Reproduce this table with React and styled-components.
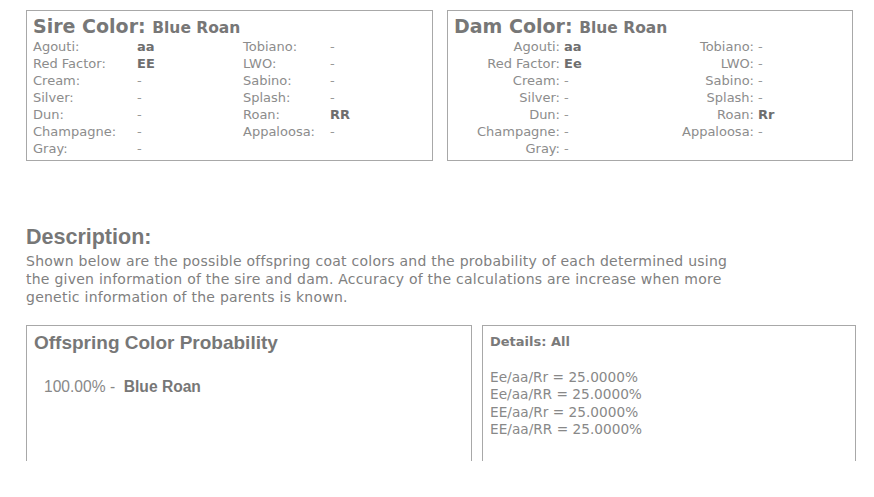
import React from "react";
import styled, { createGlobalStyle } from "styled-components";

const GlobalStyle = createGlobalStyle`
  body {
    margin: 0;
    background: #fff;
    font-family: "DejaVu Sans", Verdana, sans-serif;
    color: #888;
  }
`;

const sire = [
  ["Agouti:", "aa", "Tobiano:", "-"],
  ["Red Factor:", "EE", "LWO:", "-"],
  ["Cream:", "-", "Sabino:", "-"],
  ["Silver:", "-", "Splash:", "-"],
  ["Dun:", "-", "Roan:", "RR"],
  ["Champagne:", "-", "Appaloosa:", "-"],
  ["Gray:", "-", "", ""],
];

const dam = [
  ["Agouti:", "aa", "Tobiano:", "-"],
  ["Red Factor:", "Ee", "LWO:", "-"],
  ["Cream:", "-", "Sabino:", "-"],
  ["Silver:", "-", "Splash:", "-"],
  ["Dun:", "-", "Roan:", "Rr"],
  ["Champagne:", "-", "Appaloosa:", "-"],
  ["Gray:", "-", "", ""],
];

const details = [
  "Ee/aa/Rr = 25.0000%",
  "Ee/aa/RR = 25.0000%",
  "EE/aa/Rr = 25.0000%",
  "EE/aa/RR = 25.0000%",
];

const App = () => {
  return (
    <Page>
      <GlobalStyle />
      <ParentRow>
        <ParentCard $width={407}>
          <CardTitle>
            Sire Color: <small>Blue Roan</small>
          </CardTitle>
          <GeneGrid $cols="104px 106px 87px 1fr">
            {sire.map((row, i) => (
              <React.Fragment key={i}>
                <Label>{row[0]}</Label>
                <Value $bold={row[1] !== "-"}>{row[1]}</Value>
                <Label>{row[2]}</Label>
                <Value $bold={row[3] !== "-"}>{row[3]}</Value>
              </React.Fragment>
            ))}
          </GeneGrid>
        </ParentCard>
        <ParentCard $width={406}>
          <CardTitle>
            Dam Color: <small>Blue Roan</small>
          </CardTitle>
          <GeneGrid $cols="106px 97px 97px 1fr">
            {dam.map((row, i) => (
              <React.Fragment key={i}>
                <Label $right>{row[0]}</Label>
                <Value $bold={row[1] !== "-"} $tight>{row[1]}</Value>
                <Label $right>{row[2]}</Label>
                <Value $bold={row[3] !== "-"} $tight>{row[3]}</Value>
              </React.Fragment>
            ))}
          </GeneGrid>
        </ParentCard>
      </ParentRow>

      <Description>
        <h2>Description:</h2>
        <p>
          Shown below are the possible offspring coat colors and the probability of each
          determined using the given information of the sire and dam. Accuracy of the
          calculations are increase when more genetic information of the parents is known.
        </p>
      </Description>

      <ResultRow>
        <ResultCard $width={446}>
          <ProbTitle>Offspring Color Probability</ProbTitle>
          <ProbLine>
            100.00% - &nbsp;<b>Blue Roan</b>
          </ProbLine>
        </ResultCard>
        <ResultCard $width={374}>
          <DetailsTitle>Details: All</DetailsTitle>
          <DetailList>
            {details.map((d) => (
              <li key={d}>{d}</li>
            ))}
          </DetailList>
        </ResultCard>
      </ResultRow>
    </Page>
  );
};

export default App;

const Page = styled.div`
  padding: 10px 0 0 26px;
  height: 487px;
  overflow: hidden;
`;

const ParentRow = styled.div`
  display: flex;
  gap: 14px;
`;

const ParentCard = styled.section`
  box-sizing: border-box;
  width: ${(p) => p.$width}px;
  height: 151px;
  border: 1px solid #a8a8a8;
  padding: 5px 6px 0 6px;
`;

const CardTitle = styled.h3`
  margin: 0;
  font-size: 19px;
  line-height: 20px;
  font-weight: bold;
  color: #777;
  small {
    font-size: 15.5px;
  }
`;

const GeneGrid = styled.div`
  display: grid;
  grid-template-columns: ${(p) => p.$cols};
  font-size: 13px;
  line-height: 17px;
  white-space: nowrap;
`;

const Label = styled.span`
  color: #8c8c8c;
  text-align: ${(p) => (p.$right ? "right" : "left")};
`;

const Value = styled.span`
  color: ${(p) => (p.$bold ? "#6e6e6e" : "#999")};
  font-weight: ${(p) => (p.$bold ? "bold" : "normal")};
  padding-left: ${(p) => (p.$tight ? "4px" : "0")};
`;

const Description = styled.div`
  margin-top: 64px;
  h2 {
    margin: 0 0 3px 0;
    font-family: "Liberation Sans", Arial, sans-serif;
    font-size: 21.5px;
    line-height: 24px;
    font-weight: bold;
    color: #777;
  }
  p {
    margin: 0;
    width: 720px;
    font-size: 14px;
    letter-spacing: 0.25px;
    line-height: 18px;
    color: #808080;
  }
`;

const ResultRow = styled.div`
  display: flex;
  gap: 10px;
  margin-top: 19px;
`;

const ResultCard = styled.section`
  box-sizing: border-box;
  width: ${(p) => p.$width}px;
  height: 136px;
  border: 1px solid #a8a8a8;
  border-bottom: none;
  padding: 6px 7px 0 7px;
`;

const ProbTitle = styled.h3`
  margin: 0;
  font-family: "Liberation Sans", Arial, sans-serif;
  font-size: 19px;
  line-height: 22px;
  font-weight: bold;
  color: #777;
`;

const ProbLine = styled.div`
  margin: 23px 0 0 10px;
  font-family: "Liberation Sans", Arial, sans-serif;
  font-size: 15.6px;
  line-height: 20px;
  color: #888;
  b {
    color: #777;
  }
`;

const DetailsTitle = styled.h4`
  margin: 1px 0 0 0;
  font-size: 13px;
  line-height: 18px;
  font-weight: bold;
  color: #7a7a7a;
`;

const DetailList = styled.ul`
  list-style: none;
  margin: 18px 0 0 0;
  padding: 0;
  font-size: 13.7px;
  line-height: 17.4px;
  color: #888;
`;
